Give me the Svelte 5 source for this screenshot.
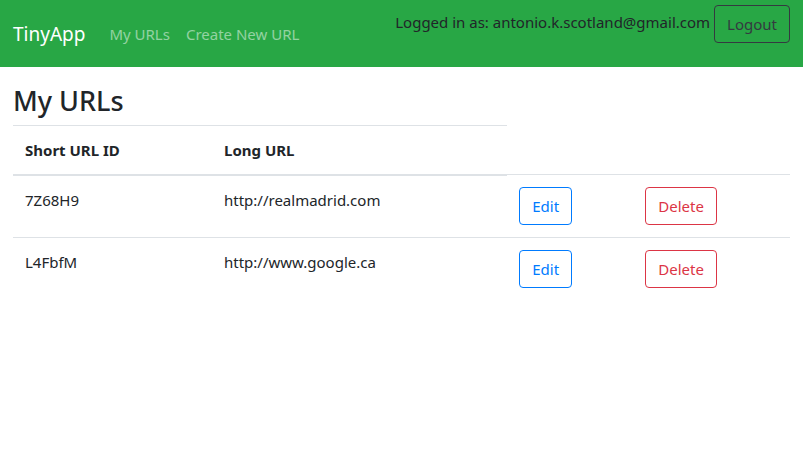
<script>
  const urls = [
    { id: '7Z68H9', longUrl: 'http://realmadrid.com' },
    { id: 'L4FbfM', longUrl: 'http://www.google.ca' },
  ];
</script>

<header>
  <nav>
    <a class="brand" href="#home">TinyApp</a>
    <a class="link" href="#urls">My URLs</a>
    <a class="link" href="#new">Create New URL</a>
  </nav>
  <form class="session">
    <span>Logged in as: antonio.k.scotland@gmail.com</span>
    <button type="button" class="btn dark">Logout</button>
  </form>
</header>

<main>
  <h3>My URLs</h3>
  <table>
    <colgroup>
      <col class="id" /><col class="long" /><col class="edit" /><col class="delete" />
    </colgroup>
    <thead>
      <tr>
        <th scope="col">Short URL ID</th>
        <th scope="col">Long URL</th>
      </tr>
    </thead>
    <tbody>
      {#each urls as url (url.id)}
        <tr>
          <td class="text">{url.id}</td>
          <td class="text">{url.longUrl}</td>
          <td><button type="button" class="btn primary">Edit</button></td>
          <td><button type="button" class="btn danger">Delete</button></td>
        </tr>
      {/each}
    </tbody>
  </table>
</main>

<style>
  :global(body) {
    margin: 0;
    background: #fff;
    color: #212529;
    font-family: 'Segoe UI', 'Noto Sans', 'Open Sans', sans-serif;
    font-size: 15px;
    line-height: 24px;
  }

  header {
    display: flex;
    justify-content: space-between;
    align-items: flex-start;
    padding: 5px 13px;
    background: #28a745;
  }

  nav {
    display: flex;
    align-items: center;
    min-height: 57px;
  }

  nav a {
    text-decoration: none;
    white-space: nowrap;
  }

  .brand {
    margin-right: 16px;
    color: #fff;
    font-size: 19px;
  }

  .link {
    padding: 8px;
    color: rgba(255, 255, 255, 0.5);
  }

  .session {
    display: flex;
    align-items: flex-start;
    gap: 4px;
  }

  .session span {
    padding-top: 5px;
  }

  .btn {
    box-sizing: border-box;
    height: 38px;
    margin: 0;
    padding: 6px 12px;
    border: 1px solid currentColor;
    border-radius: 4px;
    background: transparent;
    font: inherit;
    vertical-align: middle;
    cursor: pointer;
  }

  .dark {
    color: #343a40;
  }

  .primary {
    color: #007bff;
  }

  .danger {
    color: #dc3545;
  }

  main {
    padding: 16px 13px;
  }

  h3 {
    margin: 0 0 6px;
    font-size: 27px;
    font-weight: 500;
    line-height: 36px;
  }

  table {
    width: 100%;
    table-layout: fixed;
    border-collapse: separate;
    border-spacing: 0;
  }

  .id {
    width: 199px;
  }

  .long {
    width: 38%;
  }

  .edit {
    width: 126px;
  }

  th,
  td {
    padding: 12px;
    border-top: 1px solid #dee2e6;
    text-align: left;
    vertical-align: top;
  }

  th {
    font-weight: 700;
  }

  tbody tr:first-child .text {
    border-top-width: 2px;
  }
</style>
